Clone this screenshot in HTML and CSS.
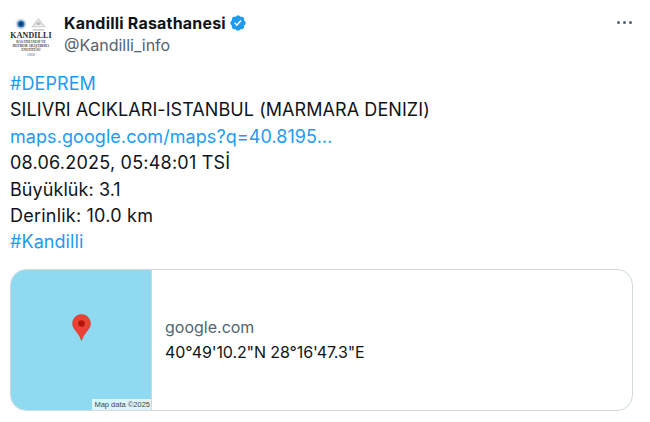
FILE: index.html
```html
<!DOCTYPE html>
<html lang="tr">
<head>
<meta charset="utf-8">
<title>Kandilli Rasathanesi</title>
<link rel="stylesheet" href="styles.css">
</head>
<body>
<main class="tweet">
  <header class="head">
    <div class="avatar">
      <div class="logo-icons">
        <svg class="seal" viewBox="0 0 12 12" width="12" height="12"><circle cx="6" cy="6" r="5.500" fill="#d5dfe9"/><circle cx="6" cy="6" r="3.600" fill="#2a78bd"/><path d="M6 3.400 8.400 6 6 8.600 3.600 6Z" fill="#0b3a6e"/></svg>
        <svg class="dome" viewBox="0 0 18 16" width="17" height="15"><path d="M9 1 17 11H1Z" fill="#d6d6d6"/><path d="M9 3.500 13.500 9.500H4.500Z" fill="#f0f0f0"/><path d="M7 5.500h4v3H7Z" fill="#bdbdbd"/><path d="M3 13h12v1.500H3Z" fill="#c4c4c4"/></svg>
      </div>
      <div class="logo-name">KANDILLI</div>
      <div class="logo-sub">RASATHANESİ VE</div>
      <div class="logo-sub">DEPREM ARAŞTIRMA</div>
      <div class="logo-sub">ENSTİTÜSÜ</div>
      <div class="logo-year">1868</div>
    </div>
    <div class="identity">
      <div class="name-row">
        <span class="name">Kandilli Rasathanesi</span>
        <svg class="badge" viewBox="0 0 22 22" width="18" height="18"><path fill="#1d9bf0" d="M20.396 11c-.018-.646-.215-1.275-.57-1.816-.354-.54-.852-.972-1.438-1.246.223-.607.27-1.264.14-1.897-.131-.634-.437-1.218-.882-1.687-.47-.445-1.053-.75-1.687-.882-.633-.13-1.29-.083-1.897.14-.273-.587-.704-1.086-1.245-1.44S11.647 1.620 11 1.604c-.646.017-1.273.213-1.813.568s-.969.854-1.24 1.440c-.608-.223-1.267-.272-1.902-.14-.635.13-1.22.436-1.69.882-.445.47-.749 1.055-.878 1.688-.13.633-.08 1.29.144 1.896-.587.274-1.087.705-1.443 1.245-.356.54-.555 1.170-.574 1.817.02.647.218 1.276.574 1.817.356.54.856.972 1.443 1.245-.224.606-.274 1.263-.144 1.896.13.634.433 1.218.877 1.688.47.443 1.054.747 1.687.878.633.132 1.29.084 1.897-.136.274.586.705 1.084 1.246 1.439.54.354 1.170.551 1.816.569.647-.016 1.276-.213 1.817-.567s.972-.854 1.245-1.440c.604.239 1.266.296 1.903.164.636-.132 1.22-.447 1.680-.907.46-.46.776-1.044.908-1.681s.075-1.299-.165-1.903c.586-.274 1.084-.705 1.439-1.246.354-.54.551-1.170.569-1.816z"/><path fill="#fff" d="M9.662 14.850l-3.429-3.428 1.293-1.302 2.072 2.072 4.400-4.794 1.347 1.246z"/></svg>
      </div>
      <div class="handle">@Kandilli_info</div>
    </div>
    <div class="more" aria-label="Daha fazla"><i></i><i></i><i></i></div>
  </header>

  <div class="body">
    <div class="link">#DEPREM</div>
    <div>SILIVRI ACIKLARI-ISTANBUL (MARMARA DENIZI)</div>
    <div class="link">maps.google.com/maps?q=40.8195…</div>
    <div class="wide">08.06.2025, 05:48:01 TSİ</div>
    <div>Büyüklük: 3.1</div>
    <div class="wide">Derinlik: 10.0 km</div>
    <div class="link">#Kandilli</div>
  </div>

  <article class="card">
    <div class="map">
      <svg class="pin" viewBox="0 0 19 27" width="19" height="27"><path d="M9.500.6C4.500.6.600 4.600.600 9.500c0 2.400.9 4.200 2.400 6.300 2.700 3.500 5.300 6.500 6.500 10.600 1.200-4.100 3.800-7.100 6.500-10.600 1.500-2.100 2.400-3.900 2.400-6.300C18.400 4.600 14.500.6 9.500.6Z" fill="#ea4335" stroke="#d8352b" stroke-width=".6"/><circle cx="9.500" cy="9.500" r="3.300" fill="#b3140f"/></svg>
      <span class="attrib">Map data ©2025</span>
    </div>
    <div class="info">
      <div class="domain">google.com</div>
      <div class="coords">40°49'10.2"N 28°16'47.3"E</div>
    </div>
  </article>
</main>
</body>
</html>
```

FILE: styles.css
```css
* { box-sizing: border-box; }
html, body { margin: 0; padding: 0; background: #fff; }
body {
  width: 650px;
  height: 422px;
  overflow: hidden;
  font-family: Inter, "Liberation Sans", sans-serif;
  color: #0f1419;
}
.tweet { padding: 12px 18px 0 10px; }
.head { display: flex; align-items: flex-start; height: 59px; }
.avatar {
  width: 42px;
  height: 48px;
  margin-top: 5px;
  display: flex;
  flex-direction: column;
  align-items: center;
  color: #2b2b2b;
  line-height: 1;
  white-space: nowrap;
}
.logo-icons { display: flex; gap: 3px; align-items: center; height: 14px; }
.logo-name { font-family: "Liberation Serif", serif; font-size: 8px; font-weight: 700; letter-spacing: .1px; margin-top: 1px; }
.logo-sub { font-family: "Liberation Serif", serif; font-size: 3.400px; line-height: 4px; font-weight: 700; color: #444; }
.logo-year { font-family: "Liberation Sans", sans-serif; font-size: 3.500px; line-height: 6px; color: #777; }
.identity { margin-left: 12px; }
.name-row { display: flex; align-items: center; gap: 3px; height: 22px; }
.name { font-size: 16px; font-weight: 700; letter-spacing: .2px; }
.badge { display: block; }
.handle { font-size: 16px; line-height: 22px; color: #536471; }
.more { margin-left: auto; margin-top: 9px; display: flex; gap: 3px; }
.more i { width: 3px; height: 3px; border-radius: 50%; background: #536471; }
.body { font-size: 18px; line-height: 26.400px; letter-spacing: .07px; }
.wide { letter-spacing: .22px; }
.link { color: #1d9bf0; }
.card {
  display: flex;
  width: 623px;
  height: 142px;
  margin-top: 13px;
  border: 1px solid #cfd9de;
  border-radius: 16px;
  overflow: hidden;
}
.map {
  position: relative;
  flex: 0 0 140px;
  background: #8fdaf1;
  display: flex;
  align-items: flex-start;
  justify-content: center;
  padding-top: 44px;
}
.pin { display: block; }
.attrib {
  position: absolute;
  right: 0;
  bottom: 0;
  padding: 0 1px 0 2px;
  background: rgba(255,255,255,.7);
  font-family: "Liberation Sans", sans-serif;
  font-size: 7.500px;
  line-height: 11px;
  color: #444;
}
.info {
  flex: 1;
  border-left: 1px solid #cfd9de;
  padding-left: 13px;
  display: flex;
  flex-direction: column;
  justify-content: center;
  font-size: 16px;
  line-height: 25px;
}
.domain { color: #536471; }
.coords { letter-spacing: -.1px; }
```
